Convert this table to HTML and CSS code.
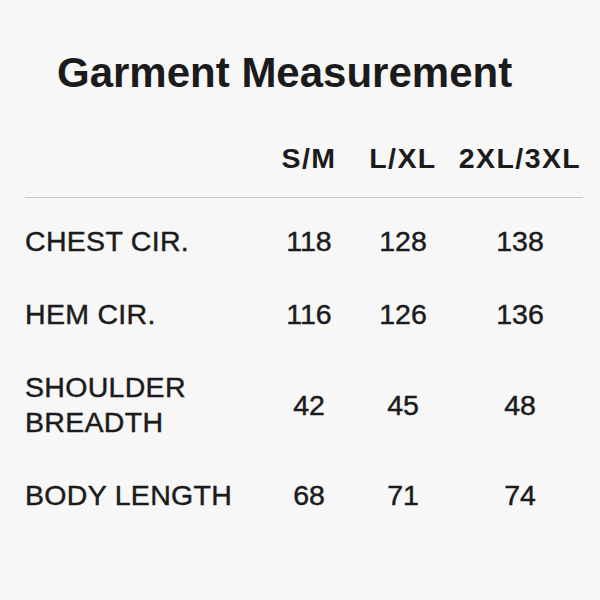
FILE: index.html
```html
<!DOCTYPE html>
<html lang="en">
<head>
<meta charset="utf-8">
<title>Garment Measurement</title>
<link rel="stylesheet" href="styles.css">
</head>
<body>
<main class="sheet">
  <h1 class="title">Garment Measurement</h1>
  <div class="table">
    <div class="row head">
      <span class="label"></span>
      <span class="cell">S/M</span>
      <span class="cell">L/XL</span>
      <span class="cell">2XL/3XL</span>
    </div>
    <div class="rule"></div>
    <div class="body">
      <div class="row">
        <span class="label">CHEST CIR.</span>
        <span class="cell">118</span>
        <span class="cell">128</span>
        <span class="cell">138</span>
      </div>
      <div class="row">
        <span class="label">HEM CIR.</span>
        <span class="cell">116</span>
        <span class="cell">126</span>
        <span class="cell">136</span>
      </div>
      <div class="row">
        <span class="label">SHOULDER<br>BREADTH</span>
        <span class="cell">42</span>
        <span class="cell">45</span>
        <span class="cell">48</span>
      </div>
      <div class="row">
        <span class="label">BODY LENGTH</span>
        <span class="cell">68</span>
        <span class="cell">71</span>
        <span class="cell">74</span>
      </div>
    </div>
  </div>
</main>
</body>
</html>
```

FILE: styles.css
```css
html, body {
  margin: 0;
  padding: 0;
  background: #f7f7f7;
}

body {
  width: 600px;
  height: 600px;
  overflow: hidden;
  font-family: "Liberation Sans", Arial, sans-serif;
  color: #1b1b1b;
}

.sheet {
  padding: 49px 17px 0 25px;
}

.title {
  margin: 0 0 44px 32px;
  font-size: 42px;
  line-height: 48px;
  font-weight: 700;
  letter-spacing: 0;
}

.row {
  display: grid;
  grid-template-columns: 235px 98px 90px 144px;
  align-items: center;
  font-size: 28.5px;
  line-height: 35px;
  -webkit-text-stroke: 0.45px #1b1b1b;
}

.head {
  font-weight: 700;
  letter-spacing: 1.4px;
  -webkit-text-stroke: 0;
}

.label {
  text-align: left;
  letter-spacing: 0.3px;
}

.cell {
  text-align: center;
}

.rule {
  height: 1px;
  background: #c8c8c8;
  margin: 21px 0 26px 0;
  width: 558px;
}

.body {
  display: flex;
  flex-direction: column;
  gap: 38px;
}
```
